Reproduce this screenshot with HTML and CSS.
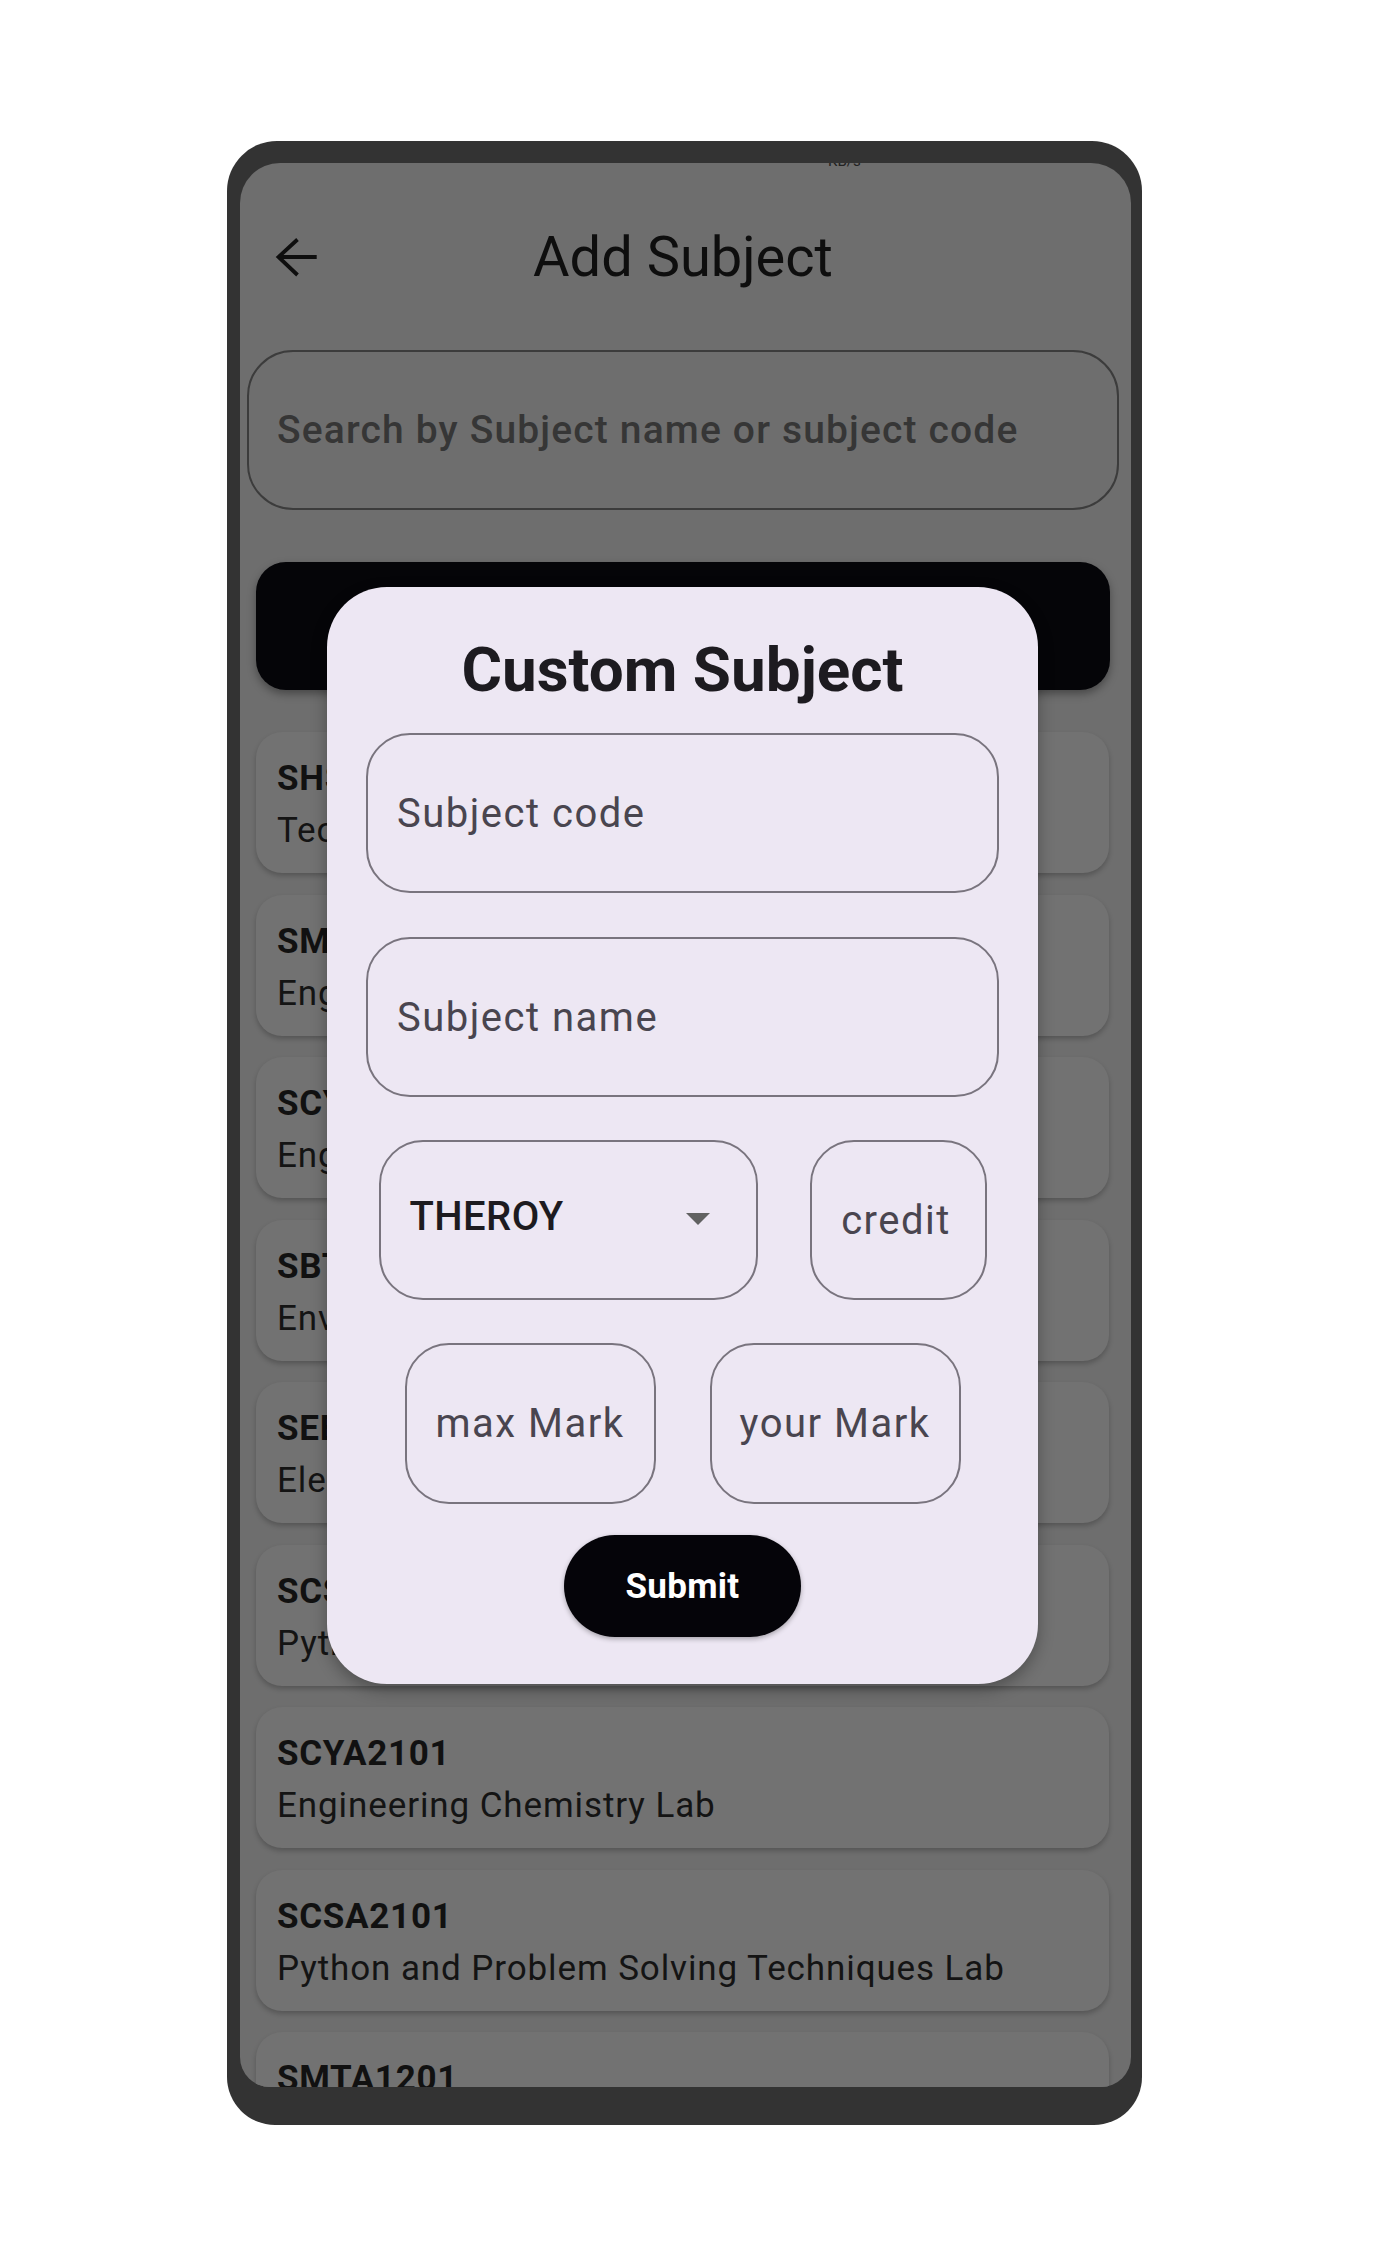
FILE: index.html
```html
<!DOCTYPE html>
<html lang="en">
<head>
<meta charset="utf-8">
<title>Add Subject</title>
<link rel="stylesheet" href="styles.css">
</head>
<body>
<div class="phone">
  <div class="screen">
    <span class="status-text">KB/s</span>
    <header class="appbar">
      <svg class="back" width="44" height="44" viewBox="0 0 44 44" aria-label="Back">
        <path d="M22.5 4.5 L3.5 22 L22.5 40 M3.5 22 H41.7" fill="none" stroke="#0e0e0e" stroke-width="3.8" stroke-linejoin="miter"/>
      </svg>
      <h1 class="title">Add Subject</h1>
      <span></span>
    </header>
    <div class="search">Search by Subject name or subject code</div>
    <div class="cta"></div>
    <div class="list">
      <div class="card"><div class="code">SHSA1101</div><div class="name">Technical English</div></div>
      <div class="card"><div class="code">SMTA1101</div><div class="name">Engineering Mathematics - I</div></div>
      <div class="card"><div class="code">SCYA1101</div><div class="name">Engineering Chemistry</div></div>
      <div class="card"><div class="code">SBTA1101</div><div class="name">Environmental Science</div></div>
      <div class="card"><div class="code">SEEA1101</div><div class="name">Electrical and Electronics Engineering</div></div>
      <div class="card"><div class="code">SCSA1101</div><div class="name">Python and Problem Solving Techniques</div></div>
      <div class="card"><div class="code">SCYA2101</div><div class="name">Engineering Chemistry Lab</div></div>
      <div class="card"><div class="code">SCSA2101</div><div class="name">Python and Problem Solving Techniques Lab</div></div>
      <div class="card"><div class="code">SMTA1201</div><div class="name">Engineering Mathematics - II</div></div>
    </div>

    <div class="dialog">
      <h2 class="dlg-title">Custom Subject</h2>
      <div class="field wide">Subject code</div>
      <div class="field wide gap">Subject name</div>
      <div class="row row3">
        <div class="field dropdown"><span>THEROY</span><span class="caret"></span></div>
        <div class="field center credit">credit</div>
      </div>
      <div class="row row4">
        <div class="field center mark">max Mark</div>
        <div class="field center mark">your Mark</div>
      </div>
      <div class="submit">Submit</div>
    </div>
  </div>
</div>
</body>
</html>
```
FILE: styles.css
```css
* { box-sizing: border-box; }

body {
  margin: 0;
  background: #ffffff;
  font-family: Roboto, "Noto Sans", "Liberation Sans", sans-serif;
}

.phone {
  margin: 141px 0 0 227px;
  width: 915px;
  height: 1984px;
  background: #333333;
  border-radius: 50px 50px 48px 48px;
  padding: 22px 11px 38px 13px;
}

.screen {
  position: relative;
  width: 891px;
  height: 1924px;
  background: #6e6e6e;
  border-radius: 40px 40px 30px 30px;
  overflow: hidden;
}

.status-text {
  position: absolute;
  left: 588px;
  top: -9px;
  font-size: 15px;
  line-height: 15px;
  color: #222;
}

.appbar {
  display: grid;
  grid-template-columns: 1fr auto 1fr;
  align-items: center;
  height: 100px;
  margin-top: 44px;
  padding-right: 5px;
}

.back {
  display: block;
  margin-left: 35px;
}

.title {
  margin: 0;
  font-size: 56px;
  font-weight: 400;
  color: #0e0e0e;
}

.search {
  margin: 43px 12px 0 7px;
  height: 160px;
  border: 2px solid #3c3c3c;
  border-radius: 46px;
  display: flex;
  align-items: center;
  padding-left: 28px;
  font-size: 39px;
  font-weight: 500;
  letter-spacing: 1.15px;
  color: #363636;
}

.cta {
  margin: 52px 21px 0 16px;
  height: 128px;
  background: #050508;
  border-radius: 30px;
  box-shadow: 0 4px 8px rgba(0, 0, 0, 0.35);
}

.list {
  margin: 42px 22px 0 16px;
  display: flex;
  flex-direction: column;
  gap: 21.5px;
}

.card {
  flex-shrink: 0;
  height: 141px;
  background: #727272;
  border-radius: 26px;
  box-shadow: 0 3px 5px rgba(0, 0, 0, 0.22);
  padding: 22px 21px 0;
}

.code {
  font-size: 35px;
  font-weight: 700;
  line-height: 50px;
  letter-spacing: 0.7px;
  color: #111111;
}

.name {
  font-size: 35px;
  line-height: 54px;
  letter-spacing: 0.9px;
  color: #141414;
  white-space: nowrap;
}

/* dialog */
.dialog {
  position: absolute;
  left: 87px;
  top: 424px;
  width: 711px;
  background: #ede7f3;
  border-radius: 60px;
  padding: 46.5px 0 47px;
  display: flex;
  flex-direction: column;
  box-shadow: 0 6px 16px rgba(0, 0, 0, 0.3);
}

.dlg-title {
  margin: 0 0 27.5px;
  text-align: center;
  font-size: 62px;
  font-weight: 700;
  line-height: 72px;
  color: #1d1b20;
}

.field {
  height: 160px;
  border: 2px solid #79747e;
  border-radius: 44px;
  display: flex;
  align-items: center;
  font-size: 40px;
  letter-spacing: 1.5px;
  color: #49454f;
}

.field.wide {
  margin: 0 39px;
  padding-left: 29px;
}

.field.wide.gap { margin-top: 44px; }

.field.center { justify-content: center; }

.row {
  display: flex;
  justify-content: center;
  margin-top: 43px;
}

.row3 { gap: 52px; }
.row4 { gap: 54px; }

.dropdown {
  width: 379px;
  justify-content: space-between;
  padding: 0 46px 8px 29px;
  font-weight: 500;
  letter-spacing: 0.4px;
  color: #1d1b20;
}

.caret {
  width: 0;
  height: 0;
  border-left: 12.5px solid transparent;
  border-right: 12.5px solid transparent;
  border-top: 12.6px solid #616161;
  margin-top: 6px;
}

.credit {
  width: 177px;
  padding-right: 4px;
}

.mark {
  width: 251px;
  height: 161px;
}

.submit {
  align-self: center;
  margin-top: 31px;
  width: 237px;
  height: 102px;
  border-radius: 51px;
  background: #050409;
  color: #ffffff;
  font-size: 35px;
  font-weight: 700;
  letter-spacing: 0.3px;
  display: flex;
  align-items: center;
  justify-content: center;
  box-shadow: 0 2px 5px rgba(0, 0, 0, 0.3);
}
```
